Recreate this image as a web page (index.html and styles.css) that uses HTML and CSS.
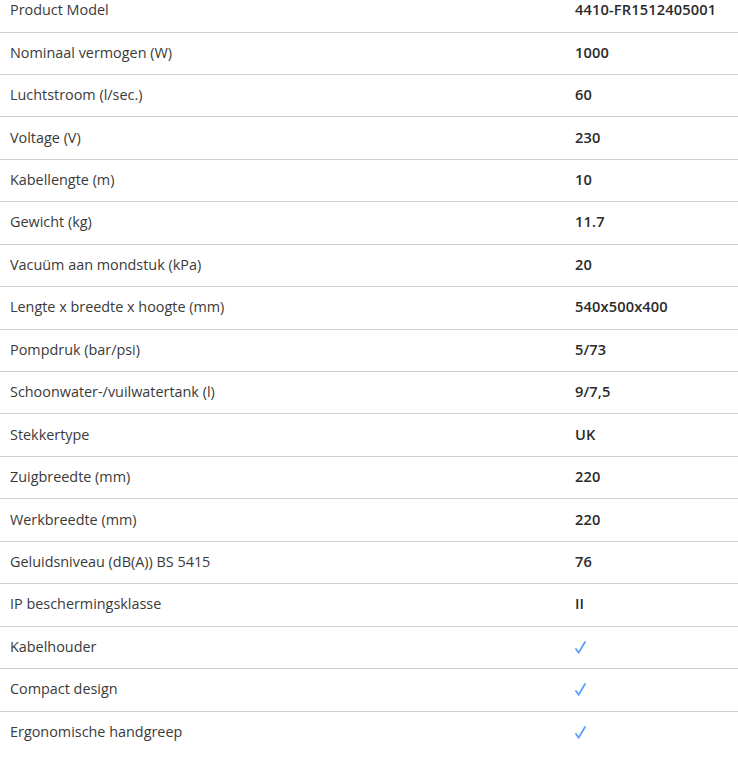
FILE: index.html
```html
<!DOCTYPE html>
<html lang="nl">
<head>
<meta charset="utf-8">
<link rel="stylesheet" href="styles.css">
</head>
<body>
<div class="specs">
  <div class="row first"><div class="label">Product Model</div><div class="value">4410-FR1512405001</div></div>
  <div class="row"><div class="label">Nominaal vermogen (W)</div><div class="value">1000</div></div>
  <div class="row"><div class="label">Luchtstroom (l/sec.)</div><div class="value">60</div></div>
  <div class="row"><div class="label">Voltage (V)</div><div class="value">230</div></div>
  <div class="row"><div class="label">Kabellengte (m)</div><div class="value">10</div></div>
  <div class="row"><div class="label">Gewicht (kg)</div><div class="value">11.7</div></div>
  <div class="row"><div class="label">Vacuüm aan mondstuk (kPa)</div><div class="value">20</div></div>
  <div class="row"><div class="label">Lengte x breedte x hoogte (mm)</div><div class="value">540x500x400</div></div>
  <div class="row"><div class="label">Pompdruk (bar/psi)</div><div class="value">5/73</div></div>
  <div class="row"><div class="label">Schoonwater-/vuilwatertank (l)</div><div class="value">9/7,5</div></div>
  <div class="row"><div class="label">Stekkertype</div><div class="value">UK</div></div>
  <div class="row"><div class="label">Zuigbreedte (mm)</div><div class="value">220</div></div>
  <div class="row"><div class="label">Werkbreedte (mm)</div><div class="value">220</div></div>
  <div class="row"><div class="label">Geluidsniveau (dB(A)) BS 5415</div><div class="value">76</div></div>
  <div class="row"><div class="label">IP beschermingsklasse</div><div class="value">II</div></div>
  <div class="row"><div class="label">Kabelhouder</div><div class="value"><svg class="check" width="11" height="13" viewBox="0 0 11 13"><polyline points="1,8 3.6,11.8 10,1" fill="none" stroke="#5aa2fb" stroke-width="1.8" stroke-linecap="round" stroke-linejoin="round"/></svg></div></div>
  <div class="row"><div class="label">Compact design</div><div class="value"><svg class="check" width="11" height="13" viewBox="0 0 11 13"><polyline points="1,8 3.6,11.8 10,1" fill="none" stroke="#5aa2fb" stroke-width="1.8" stroke-linecap="round" stroke-linejoin="round"/></svg></div></div>
  <div class="row last"><div class="label">Ergonomische handgreep</div><div class="value"><svg class="check" width="11" height="13" viewBox="0 0 11 13"><polyline points="1,8 3.6,11.8 10,1" fill="none" stroke="#5aa2fb" stroke-width="1.8" stroke-linecap="round" stroke-linejoin="round"/></svg></div></div>
</div>
</body>
</html>
```
FILE: styles.css
```css
html, body {
  margin: 0;
  padding: 0;
  background: #fff;
}
body {
  font-family: "Open Sans", "Noto Sans", sans-serif;
  font-size: 14px;
  color: #333;
}
.specs {
  width: 738px;
}
.row {
  display: grid;
  grid-template-columns: 565px 1fr;
  border-bottom: 1px solid #cfcfcf;
  height: 42.44px;
  box-sizing: border-box;
  align-items: center;
}
.row > div {
  margin-top: -2px;
}
.row.first {
  height: 32.5px;
}
.row.first > div {
  margin-top: -12px;
}
.row.last {
  border-bottom: none;
}
.label {
  padding-left: 10px;
  line-height: 21px;
  font-size: 14.4px;
  color: #3a3a3a;
}
.value {
  padding-left: 10px;
  line-height: 21px;
  font-size: 14.6px;
  font-weight: 600;
  color: #2a2a2a;
  letter-spacing: 0.15px;
}
.check {
  display: block;
  margin-top: 2px;
}
```
